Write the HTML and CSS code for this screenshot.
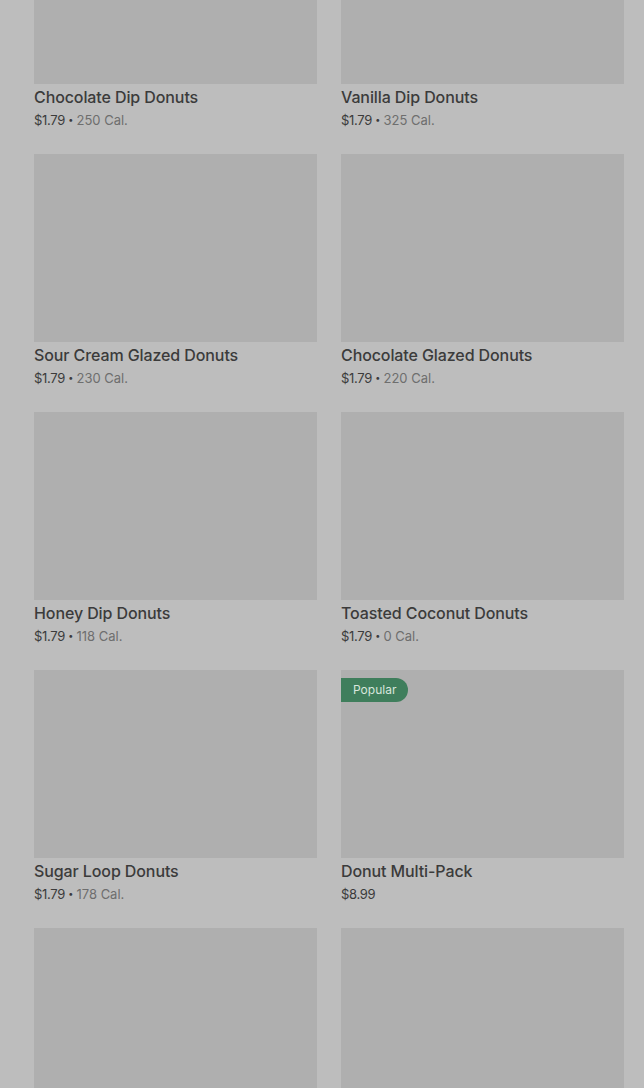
FILE: index.html
```html
<!DOCTYPE html>
<html lang="en">
    <head>
        <title>Donuts</title>
        <link rel="stylesheet" href="styles.css">
    </head>
    <body>
<div class="menu-grid">
    <div class="item">
        <div class="item-img"></div>
        <div class="item-name">Chocolate Dip Donuts</div>
        <div class="item-meta">$1.79 <span class="dot">•</span> <span class="cal">250 Cal.</span></div>
    </div>
    <div class="item">
        <div class="item-img"></div>
        <div class="item-name">Vanilla Dip Donuts</div>
        <div class="item-meta">$1.79 <span class="dot">•</span> <span class="cal">325 Cal.</span></div>
    </div>
    <div class="item">
        <div class="item-img"></div>
        <div class="item-name">Sour Cream Glazed Donuts</div>
        <div class="item-meta">$1.79 <span class="dot">•</span> <span class="cal">230 Cal.</span></div>
    </div>
    <div class="item">
        <div class="item-img"></div>
        <div class="item-name">Chocolate Glazed Donuts</div>
        <div class="item-meta">$1.79 <span class="dot">•</span> <span class="cal">220 Cal.</span></div>
    </div>
    <div class="item">
        <div class="item-img"></div>
        <div class="item-name">Honey Dip Donuts</div>
        <div class="item-meta">$1.79 <span class="dot">•</span> <span class="cal">118 Cal.</span></div>
    </div>
    <div class="item">
        <div class="item-img"></div>
        <div class="item-name">Toasted Coconut Donuts</div>
        <div class="item-meta">$1.79 <span class="dot">•</span> <span class="cal">0 Cal.</span></div>
    </div>
    <div class="item">
        <div class="item-img"></div>
        <div class="item-name">Sugar Loop Donuts</div>
        <div class="item-meta">$1.79 <span class="dot">•</span> <span class="cal">178 Cal.</span></div>
    </div>
    <div class="item">
        <div class="item-img"><span class="badge">Popular</span></div>
        <div class="item-name">Donut Multi-Pack</div>
        <div class="item-meta">$8.99</div>
    </div>
    <div class="item">
        <div class="item-img"></div>
    </div>
    <div class="item">
        <div class="item-img"></div>
    </div>
</div>
    </body>
</html>
```

FILE: styles.css
```css
html, body {
    margin: 0;
    background: #bdbdbd;
    font-family: Inter, "Noto Sans", sans-serif;
    overflow: hidden;
}
.menu-grid {
    display: grid;
    grid-template-columns: 283px 283px;
    column-gap: 24px;
    row-gap: 25px;
    padding: 0 20px 0 34px;
    margin-top: -104px;
}
.item-img {
    position: relative;
    height: 188px;
    background-color: #afafaf;
}
.item-name {
    padding-top: 3px;
    height: 20px;
    font-size: 16px;
    line-height: 20px;
    font-weight: 500;
    letter-spacing: -0.1px;
    color: #3b3b3b;
}
.item-meta {
    margin-top: 4px;
    height: 18px;
    font-size: 13px;
    line-height: 18px;
    color: #3b3b3b;
    letter-spacing: -0.3px;
}
.item-meta .dot {
    font-size: 9px;
    line-height: 1;
    vertical-align: 2px;
}
.item-meta .cal { color: #6e6e6e; letter-spacing: 0; }
/* badge over the picture */
.badge {
    position: absolute;
    top: 8px;
    left: 0;
    padding: 0 12px;
    height: 24px;
    line-height: 24px;
    font-size: 12px;
    color: #d8e6dd;
    background: #3f7e5c;
    border-radius: 0 12px 12px 0;
}
```
